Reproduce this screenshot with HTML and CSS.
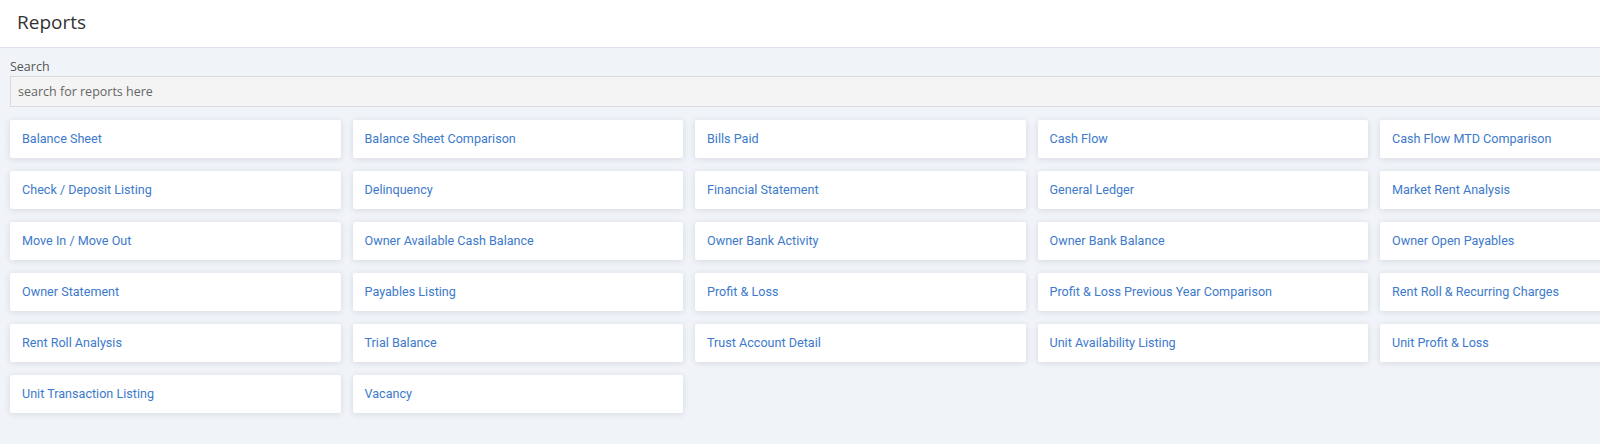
FILE: index.html
```html
<!DOCTYPE html>
<html lang="en">
<head>
    <meta charset="UTF-8" />
    <meta name="viewport" content="width=device-width, initial-scale=1.0" />
    <title>Reports</title>
    <link rel="stylesheet" href="styles.css">
</head>
<body>
    <div class="page-header">
        <h1>Reports</h1>
    </div>
    <div class="content">
        <div class="search-group">
            <label for="search">Search</label>
            <input type="text" id="search" placeholder="search for reports here" />
        </div>
        <div class="report-grid">
            <a class="report-card" href="#">Balance Sheet</a>
            <a class="report-card" href="#">Balance Sheet Comparison</a>
            <a class="report-card" href="#">Bills Paid</a>
            <a class="report-card" href="#">Cash Flow</a>
            <a class="report-card" href="#">Cash Flow MTD Comparison</a>
            <a class="report-card" href="#">Check / Deposit Listing</a>
            <a class="report-card" href="#">Delinquency</a>
            <a class="report-card" href="#">Financial Statement</a>
            <a class="report-card" href="#">General Ledger</a>
            <a class="report-card" href="#">Market Rent Analysis</a>
            <a class="report-card" href="#">Move In / Move Out</a>
            <a class="report-card" href="#">Owner Available Cash Balance</a>
            <a class="report-card" href="#">Owner Bank Activity</a>
            <a class="report-card" href="#">Owner Bank Balance</a>
            <a class="report-card" href="#">Owner Open Payables</a>
            <a class="report-card" href="#">Owner Statement</a>
            <a class="report-card" href="#">Payables Listing</a>
            <a class="report-card" href="#">Profit &amp; Loss</a>
            <a class="report-card" href="#">Profit &amp; Loss Previous Year Comparison</a>
            <a class="report-card" href="#">Rent Roll &amp; Recurring Charges</a>
            <a class="report-card" href="#">Rent Roll Analysis</a>
            <a class="report-card" href="#">Trial Balance</a>
            <a class="report-card" href="#">Trust Account Detail</a>
            <a class="report-card" href="#">Unit Availability Listing</a>
            <a class="report-card" href="#">Unit Profit &amp; Loss</a>
            <a class="report-card" href="#">Unit Transaction Listing</a>
            <a class="report-card" href="#">Vacancy</a>
        </div>
    </div>
</body>
</html>
```

FILE: styles.css
```css
html,
body {
    margin: 0;
    overflow: hidden;
}
body {
    font-family: "Open Sans", Arial, sans-serif;
    background-color: #f0f3f8;
    color: #333;
    min-height: 100vh;
}
.page-header {
    background-color: #fff;
    border-bottom: 1px solid #dde2ea;
    box-sizing: border-box;
    height: 48px;
    padding: 9px 17px 0;
}
.page-header h1 {
    margin: 0;
    font-size: 19px;
    line-height: 26px;
    font-weight: 400;
    color: #333;
}
.content {
    width: 1690px;
    padding: 10px 10px;
}
.search-group label {
    display: block;
    font-size: 12.5px;
    color: #555;
    line-height: 18px;
    margin-bottom: 0;
}
.search-group input {
    display: block;
    width: 100%;
    box-sizing: border-box;
    height: 31px;
    margin: 0;
    padding: 0 7px;
    border: 1px solid #dadada;
    background-color: #f4f4f4;
    font-family: "Open Sans", Arial, sans-serif;
    font-size: 12.5px;
    color: #555;
}
.search-group input::placeholder {
    color: #666;
}
.report-grid {
    display: grid;
    grid-template-columns: repeat(5, 330.5px);
    column-gap: 12px;
    row-gap: 13px;
    margin-top: 13px;
}
.report-card {
    display: block;
    box-sizing: border-box;
    height: 38px;
    line-height: 37px;
    padding: 0 12px;
    background-color: #fff;
    border-radius: 2px;
    box-shadow: 0 1px 6px rgba(30, 40, 60, 0.12);
    font-family: Roboto, Arial, sans-serif;
    font-size: 12.6px;
    color: #3d7acb;
    text-decoration: none;
}
```
